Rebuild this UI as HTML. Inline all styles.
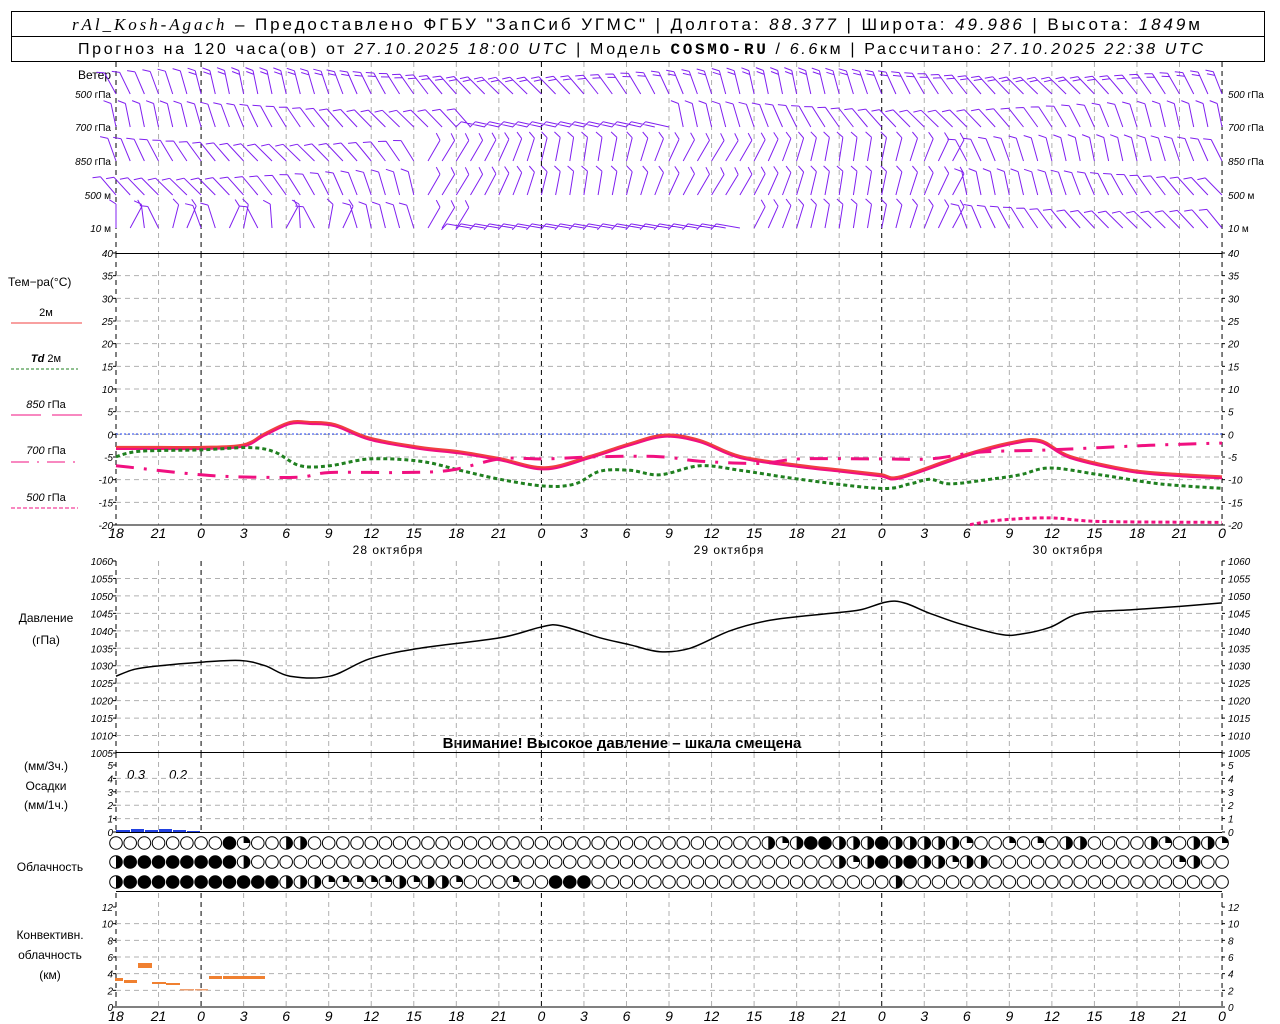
<!DOCTYPE html>
<html><head><meta charset="utf-8"><style>
body{margin:0;background:#fff;width:1280px;height:1024px;overflow:hidden;font-family:"Liberation Sans",sans-serif}
svg{position:absolute;left:0;top:0}
</style></head><body>
<svg id="s" width="1280" height="1024" xmlns="http://www.w3.org/2000/svg" font-family="Liberation Sans, sans-serif">
<rect x="11.5" y="11.5" width="1253" height="50" fill="none" stroke="#000"/>
<line x1="11" y1="36.5" x2="1265" y2="36.5" stroke="#000"/>
<text x="72" y="30" font-size="17" textLength="1128" lengthAdjust="spacing"><tspan font-family="Liberation Serif, serif" font-style="italic">rAl_Kosh-Agach</tspan> – Предоставлено ФГБУ "ЗапСиб УГМС" | Долгота: <tspan font-style="italic">88.377</tspan> | Широта: <tspan font-style="italic">49.986</tspan> | Высота: <tspan font-style="italic">1849</tspan>м</text>
<text x="78" y="54" font-size="16" textLength="1125" lengthAdjust="spacing">Прогноз на 120 часа(ов) от <tspan font-style="italic">27.10.2025 18:00 UTC</tspan>  | Модель <tspan font-family="Liberation Mono, monospace" font-weight="bold">COSMO-RU</tspan> / <tspan font-style="italic">6.6</tspan>км | Рассчитано: <tspan font-style="italic">27.10.2025 22:38 UTC</tspan></text>
<g font-size="11" fill="#000">
<text x="111" y="79" text-anchor="end" font-size="12">Ветер</text>
<text x="8" y="286" font-size="12">Тем−ра(°C)</text>
<text x="46" y="316" text-anchor="middle" font-size="11">2м</text>
<line x1="11" y1="323" x2="82" y2="323" stroke="#f04040"/>
<text x="46" y="362" text-anchor="middle" font-size="11"><tspan font-style="italic" font-weight="bold">Td</tspan>  2м</text>
<line x1="11" y1="369" x2="78" y2="369" stroke="#208020" stroke-dasharray="3,2"/>
<text x="46" y="408" text-anchor="middle"><tspan font-style="italic">850</tspan> гПа</text>
<line x1="11" y1="415" x2="41" y2="415" stroke="#f01080"/><line x1="52" y1="415" x2="82" y2="415" stroke="#f01080"/>
<text x="46" y="454" text-anchor="middle"><tspan font-style="italic">700</tspan> гПа</text>
<line x1="11" y1="462" x2="78" y2="462" stroke="#f01080" stroke-dasharray="18,8,2,8"/>
<text x="46" y="501" text-anchor="middle"><tspan font-style="italic">500</tspan> гПа</text>
<line x1="11" y1="508" x2="78" y2="508" stroke="#f01080" stroke-dasharray="4,2"/>
<text x="46" y="622" text-anchor="middle" font-size="12">Давление</text>
<text x="46" y="644" text-anchor="middle" font-size="12">(гПа)</text>
<text x="46" y="770" text-anchor="middle" font-size="12">(мм/3ч.)</text>
<text x="46" y="790" text-anchor="middle" font-size="12">Осадки</text>
<text x="46" y="809" text-anchor="middle" font-size="12">(мм/1ч.)</text>
<text x="50" y="871" text-anchor="middle" font-size="12">Облачность</text>
<text x="50" y="939" text-anchor="middle" font-size="12">Конвективн.</text>
<text x="50" y="959" text-anchor="middle" font-size="12">облачность</text>
<text x="50" y="979" text-anchor="middle" font-size="12">(км)</text>
<text x="127" y="779" font-style="italic" font-size="13">0.3</text>
<text x="169" y="779" font-style="italic" font-size="13">0.2</text>
<text x="622" y="748" text-anchor="middle" font-size="15" font-weight="bold">Внимание! Высокое давление – шкала смещена</text>
<text x="388" y="554" text-anchor="middle" font-size="12" letter-spacing="1">28 октября</text>
<text x="729" y="554" text-anchor="middle" font-size="12" letter-spacing="1">29 октября</text>
<text x="1068" y="554" text-anchor="middle" font-size="12" letter-spacing="1">30 октября</text>
</g>
<g id="g"></g>
</svg>
<script>
var S=document.getElementById('g'),NS='http://www.w3.org/2000/svg';
function el(t,a){var e=document.createElementNS(NS,t);for(var k in a)e.setAttribute(k,a[k]);S.appendChild(e);return e}
function X(h){return 116+h*14.18}
var L=116,R=1222;
var P=[[62,253],[253,525],[561,753],[753,832],[893,1007]];
P.forEach(function(p){for(var h=0;h<=78;h+=3){var x=X(h);var day=(h%24==6);var edge=(h==0||h==78);
el('line',{x1:x,y1:p[0],x2:x,y2:p[1],stroke:(day||edge)?'#000':'#b0b0b0','stroke-dasharray':'5,4'})}});
function hg(top,bot,v0,v1,step){var n=(v1-v0)/step;for(var i=0;i<=n;i++){var v=v0+i*step;var y=bot-(bot-top)*i/n;
if(i>0&&i<n)el('line',{x1:L,y1:y,x2:R,y2:y,stroke:'#b0b0b0','stroke-dasharray':'5,4'});
var t=el('text',{x:113,y:y+4,'font-size':10,'font-style':'italic','text-anchor':'end'});t.textContent=v;
var t2=el('text',{x:1228,y:y+4,'font-size':10,'font-style':'italic'});t2.textContent=v;
el('line',{x1:L-3,y1:y,x2:L,y2:y,stroke:'#000'});el('line',{x1:R,y1:y,x2:R+3,y2:y,stroke:'#000'});}}
hg(253,525,-20,40,5);hg(561,753,1005,1060,5);hg(765,832,0,5,1);hg(907,1007,0,12,2);
el('line',{x1:L,y1:253.5,x2:R,y2:253.5,stroke:'#000'});
el('line',{x1:L,y1:752.5,x2:R,y2:752.5,stroke:'#000'});
el('line',{x1:L,y1:832.5,x2:R,y2:832.5,stroke:'#000'});
el('line',{x1:L,y1:891.5,x2:R,y2:891.5,stroke:'#000'});
el('line',{x1:L,y1:525,x2:R,y2:525,stroke:'#000'});
el('line',{x1:L,y1:1007,x2:R,y2:1007,stroke:'#000'});
[534,1017].forEach(function(y){for(var h=0;h<=78;h+=3){var t=el('text',{x:X(h),y:y+4,'font-size':14,'font-style':'italic','text-anchor':'middle'});t.textContent=(18+h)%24}});
var wl=[['500 гПа',94],['700 гПа',127],['850 гПа',161],['500 м',195],['10  м',228]];
wl.forEach(function(w){var p=w[0].split(' ');var t=el('text',{x:111,y:w[1]+4,'font-size':10,'text-anchor':'end'});t.innerHTML='<tspan font-style="italic">'+p[0]+'</tspan> '+p.slice(1).join(' ');
var t2=el('text',{x:1228,y:w[1]+4,'font-size':10});t2.innerHTML='<tspan font-style="italic">'+p[0]+'</tspan> '+p.slice(1).join(' ');});
// wind barbs
var rows=[94,127,161,195,228];
var g='';
rows.forEach(function(y,r){for(var i=0;i<=78;i++){var x=X(i);
var a=-0.5+0.3*Math.sin(i/6+r*1.3);
if(r>=2&&i>21&&i<60)a=0.35+0.2*Math.sin(i/3);
if(r==1&&i>25&&i<40)a=-1.35;
if(r==4&&i>24&&i<45)a=-1.4;
if(r==4&&i<18)a=0.5*Math.sin(i*1.7);
var Lg=24;var tx=x+Lg*Math.sin(a),ty=y-Lg*Math.cos(a);
g+='M'+x.toFixed(1)+' '+y+'L'+tx.toFixed(1)+' '+ty.toFixed(1);
var nb=(r==0&&i>5)?2:1;
for(var b=0;b<nb;b++){var f=b*4/Lg;var bx=tx+(x-tx)*f,by=ty+(y-ty)*f;var ba=a-1.0;
g+='M'+bx.toFixed(1)+' '+by.toFixed(1)+'l'+(8*Math.sin(ba)).toFixed(1)+' '+(-8*Math.cos(ba)).toFixed(1);}
}});
el('path',{d:g,stroke:'#8020f0','stroke-width':1,fill:'none'});
// smooth curves
function curve(pts,f,st){var q=pts.map(function(p){return [p[0],f(p[1])]});var d='M'+q[0][0]+' '+q[0][1].toFixed(1);
for(var i=0;i<q.length-1;i++){var p0=q[Math.max(0,i-1)],p1=q[i],p2=q[i+1],p3=q[Math.min(q.length-1,i+2)];
d+='C'+(p1[0]+(p2[0]-p0[0])/6).toFixed(1)+' '+(p1[1]+(p2[1]-p0[1])/6).toFixed(1)+' '+(p2[0]-(p3[0]-p1[0])/6).toFixed(1)+' '+(p2[1]-(p3[1]-p1[1])/6).toFixed(1)+' '+p2[0]+' '+p2[1].toFixed(1);}
var e=el('path',{d:d,fill:'none'});for(var k in st)e.setAttribute(k,st[k]);}
function TY(v){return 434-v*4.533}
el('line',{x1:L,y1:434,x2:R,y2:434,stroke:'#2040f0','stroke-dasharray':'2,2'});
var T=[[116,-3],[160,-3],[201,-3],[243,-2.5],[265,0],[290,2.5],[310,2.5],[335,2],[370,-1],[420,-3],[460,-4],[500,-5.5],[545,-7.5],[590,-5],[630,-2.2],[665,-0.3],[700,-1.5],[740,-5],[800,-7],[840,-8],[880,-9],[900,-9.5],[960,-5],[1010,-2],[1040,-1.5],[1070,-5],[1130,-8],[1180,-9],[1222,-9.5]];
curve(T,TY,{stroke:'#f04040','stroke-width':3.5});
curve(T.map(function(p){return [p[0],p[1]-0.3]}),TY,{stroke:'#f01080','stroke-width':2});
var Td=[[116,-5],[140,-3.8],[201,-3.5],[250,-3],[275,-4],[300,-7],[330,-7],[370,-5.5],[420,-6],[460,-8],[500,-10],[545,-11.5],[575,-11],[600,-8.2],[630,-8],[660,-9],[700,-7],[740,-8],[800,-10],[880,-12],[910,-11],[930,-10],[950,-11],[990,-10],[1020,-9],[1050,-7.5],[1100,-9],[1160,-11],[1222,-12]];
curve(Td,TY,{stroke:'#208020','stroke-width':3,'stroke-dasharray':'4,3'});
var T7=[[116,-7],[201,-9],[250,-9.5],[300,-9.5],[330,-8.5],[400,-8.5],[450,-8],[500,-5.5],[545,-5.5],[600,-5],[660,-5],[700,-6],[760,-6.5],[800,-5.5],[880,-5.5],[930,-5.5],[980,-4],[1050,-3.5],[1150,-2.5],[1222,-2]];
curve(T7,TY,{stroke:'#f01080','stroke-width':3,'stroke-dasharray':'18,10,3,10'});
curve([[970,-20],[1000,-19],[1050,-18.5],[1100,-19.3],[1222,-19.5]],TY,{stroke:'#f01080','stroke-width':3,'stroke-dasharray':'4,3'});
var Pr=[[116,1027],[135,1029],[160,1030],[201,1031],[240,1031.5],[265,1030],[290,1027],[330,1027],[370,1032],[420,1035],[500,1038],[540,1041],[560,1041.5],[600,1038],[630,1036],[660,1034],[690,1035],[730,1040],[770,1043],[830,1045],[860,1046],[895,1048.5],[930,1045],[960,1042],[1000,1039],[1020,1039],[1050,1041],[1080,1045],[1130,1046],[1180,1047],[1222,1048]];
curve(Pr,function(p){return 561+(1060-p)*3.49},{stroke:'#000','stroke-width':1.5});
[[116,130,2],[131,144,3],[145,158,2],[159,172,3],[173,186,2],[187,200,1]].forEach(function(b){el('rect',{x:b[0],y:832-b[2],width:b[1]-b[0],height:b[2],fill:'#2040e0'})});
[[115,123,978,3],[124,137,980,3],[138,152,963,5],[152,166,982,2],[166,180,983,2],[180,194,989,1.5],[195,208,989,1.5],[209,222,976,3],[223,265,976,3]].forEach(function(b){el('rect',{x:b[0],y:b[2],width:b[1]-b[0],height:b[3],fill:b[2]>988?'#f0a070':'#f08030'})});
function z(n){return new Array(n+1).join('0')}
var C=['00000000410022'+z(31)+'0212442224232221001010230000210221',
'2444444442'+z(35)+'0000002124242212200000000000001200200',
'2444444444442231111121221000100444'+z(21)+'2'+z(23)];
var cy=[843,862,882];
C.forEach(function(s,r){for(var i=0;i<=78;i++){var x=X(i),y=cy[r],c=s[i]||'0',rr=6.3;
if(c=='4'){el('circle',{cx:x,cy:y,r:rr,fill:'#000',stroke:'#000'});continue}
el('circle',{cx:x,cy:y,r:rr,fill:'#fff',stroke:'#000'});
if(c=='2')el('path',{d:'M'+x+' '+(y-rr)+'A'+rr+' '+rr+' 0 0 1 '+x+' '+(y+rr)+'Z',fill:'#000'});
if(c=='1')el('path',{d:'M'+x+' '+y+'L'+x+' '+(y-rr)+'A'+rr+' '+rr+' 0 0 1 '+(x+rr)+' '+y+'Z',fill:'#000'});
if(c=='3')el('path',{d:'M'+x+' '+y+'L'+x+' '+(y-rr)+'A'+rr+' '+rr+' 0 1 1 '+x+' '+(y+rr)+'L'+x+' '+y+'L'+(x-rr)+' '+y+'Z',fill:'#000'});
}});
</script>
</body></html>
